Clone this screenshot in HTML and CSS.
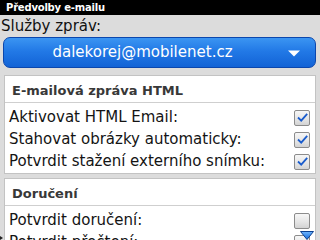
FILE: index.html
```html
<!DOCTYPE html>
<html lang="cs">
<head>
<meta charset="utf-8">
<title>Předvolby e-mailu</title>
<link rel="stylesheet" href="styles.css">
</head>
<body>
<div class="screen">
  <div class="titlebar">Předvolby e-mailu</div>
  <div class="label">Služby zpráv:</div>
  <div class="dropdown">
    <span class="dd-text">dalekorej@mobilenet.cz</span>
    <svg class="dd-arrow" width="12" height="7" viewBox="0 0 12 7"><path d="M0 0.5 H12 L6 6.5 Z" fill="#fff"/></svg>
  </div>

  <div class="panel">
    <div class="panel-head">E-mailová zpráva HTML</div>
    <div class="rows">
      <div class="row"><span>Aktivovat HTML Email:</span><span class="cb checked"><svg width="13" height="13" viewBox="0 0 13 13"><path d="M2 6.5 L5.2 9.6 L11.2 2.8" fill="none" stroke="#1a5ccc" stroke-width="1.8"/></svg></span></div>
      <div class="row"><span>Stahovat obrázky automaticky:</span><span class="cb checked"><svg width="13" height="13" viewBox="0 0 13 13"><path d="M2 6.5 L5.2 9.6 L11.2 2.8" fill="none" stroke="#1a5ccc" stroke-width="1.8"/></svg></span></div>
      <div class="row"><span>Potvrdit stažení externího snímku:</span><span class="cb checked"><svg width="13" height="13" viewBox="0 0 13 13"><path d="M2 6.5 L5.2 9.6 L11.2 2.8" fill="none" stroke="#1a5ccc" stroke-width="1.8"/></svg></span></div>
    </div>
  </div>

  <div class="panel">
    <div class="panel-head">Doručení</div>
    <div class="rows">
      <div class="row"><span>Potvrdit doručení:</span><span class="cb"></span></div>
      <div class="row"><span>Potvrdit přečtení:</span><span class="cb"></span></div>
    </div>
  </div>

  <svg class="scroll-down" width="14" height="9" viewBox="0 0 14 9">
    <defs><linearGradient id="g" x1="0" y1="0" x2="0" y2="1"><stop offset="0" stop-color="#6fb6ff"/><stop offset="1" stop-color="#1468d6"/></linearGradient></defs>
    <path d="M0.5 0.5 H13.5 L7 8.5 Z" fill="url(#g)" stroke="#0b3f8f" stroke-width="1"/>
  </svg>
  <span class="corner-mark"></span>
</div>
</body>
</html>
```

FILE: styles.css
```css
html, body {
  margin: 0;
  padding: 0;
}
body {
  background: #dcdcdc;
  font-family: "DejaVu Sans", "Noto Sans", sans-serif;
}
.screen {
  position: relative;
  width: 320px;
  height: 240px;
  overflow: hidden;
  display: flex;
  flex-direction: column;
}
.titlebar {
  flex: none;
  height: 15px;
  background: #000;
  color: #fff;
  font-weight: bold;
  font-size: 10px;
  letter-spacing: -0.2px;
  line-height: 15px;
  padding-left: 6px;
}
.label {
  flex: none;
  height: 22px;
  line-height: 22px;
  font-size: 15px;
  color: #111;
  padding-left: 1px;
}
.dropdown {
  flex: none;
  box-sizing: border-box;
  height: 31px;
  margin: 0 4px 0 3px;
  border: 1px solid #0b47ad;
  border-radius: 7px;
  background: linear-gradient(to bottom, #3b95f2 0%, #2279e6 45%, #1263d6 100%);
  color: #fff;
  font-size: 15px;
  line-height: 29px;
  display: flex;
  align-items: center;
  padding: 0 15px 0 5px;
}
.dd-text {
  flex: 1;
  text-align: center;
  padding-right: 12px;
}
.dd-arrow {
  flex: none;
  margin-top: 1px;
}
.panel {
  flex: none;
  margin: 7px 4px 0 4px;
  background: #fff;
  border: 1px solid #c3c3c3;
}
.panel + .panel {
  margin-top: 4px;
}
.panel-head {
  height: 27px;
  box-sizing: border-box;
  padding: 4px 7px 0 7px;
  line-height: 22px;
  font-size: 13px;
  font-weight: bold;
  color: #383838;
  border-bottom: 1px solid #cfcfcf;
}
.rows {
  padding: 3px 0 1px 0;
}
.row {
  height: 22px;
  line-height: 22px;
  font-size: 15px;
  color: #141414;
  display: flex;
  align-items: center;
  justify-content: space-between;
  padding: 0 5px 0 4px;
}
.cb {
  flex: none;
  box-sizing: border-box;
  width: 16px;
  height: 16px;
  border: 1px solid #8c8c8c;
  border-radius: 2px;
  background: linear-gradient(to bottom, #f7f7f7 0%, #e6e6e6 55%, #d3d3d3 100%);
  display: flex;
  align-items: center;
  justify-content: center;
  margin-top: 1px;
}
.scroll-down {
  position: absolute;
  left: 300px;
  top: 231px;
}
.corner-mark {
  position: absolute;
  left: 0;
  top: 236px;
  width: 0;
  height: 0;
  border-top: 2px solid transparent;
  border-bottom: 2px solid transparent;
  border-left: 3px solid #222;
}
```
